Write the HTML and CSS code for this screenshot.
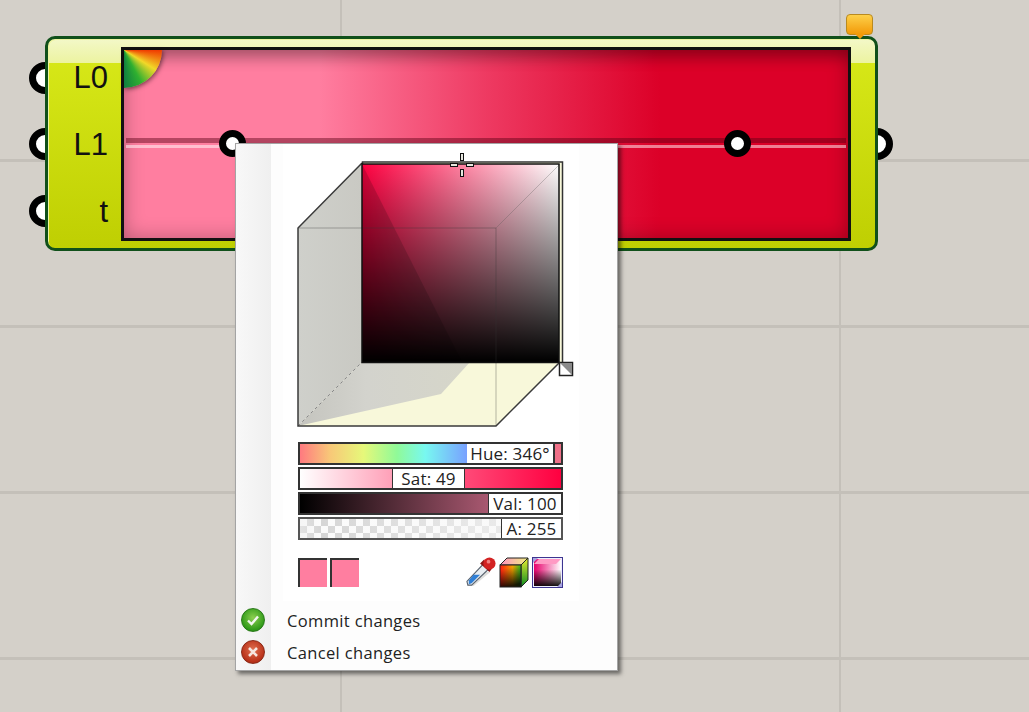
FILE: index.html
```html
<!DOCTYPE html>
<html lang="en">
<head>
    <meta charset="UTF-8">
    <title>Colour gradient component</title>
    <link rel="stylesheet" href="styles.css">
</head>
<body>
    <div class="canvas">
        <div class="gridline v" style="left: 340px"></div>
        <div class="gridline v" style="left: 839px"></div>
        <div class="gridline h" style="top: 159px"></div>
        <div class="gridline h" style="top: 325px"></div>
        <div class="gridline h" style="top: 491px"></div>
        <div class="gridline h" style="top: 657px"></div>

        <div class="grip" style="left: 29px; top: 62px"></div>
        <div class="grip" style="left: 29px; top: 128px"></div>
        <div class="grip" style="left: 29px; top: 195px"></div>
        <div class="grip" style="left: 861px; top: 128px"></div>

        <div class="node">
            <div class="labels">
                <span>L0</span>
                <span>L1</span>
                <span>t</span>
            </div>
            <div class="panel">
                <div class="wheel"></div>
                <div class="track"></div>
                <div class="handle" style="left: 95px"></div>
                <div class="handle" style="left: 600px"></div>
            </div>
        </div>
        <div class="balloon"></div>

        <div class="popup">
            <div class="sheet">
                <svg class="cube" width="290" height="286" viewBox="290 150 290 286">
                    <defs>
                        <linearGradient id="satGrad">
                            <stop offset="0" stop-color="#ff0040"/>
                            <stop offset="1" stop-color="#ffffff"/>
                        </linearGradient>
                        <linearGradient id="valGrad" x2="0" y2="1">
                            <stop offset="0" stop-color="#000" stop-opacity="0"/>
                            <stop offset="1" stop-color="#000"/>
                        </linearGradient>
                        <linearGradient id="wallGrad">
                            <stop offset="0" stop-color="#cfd0cb"/>
                            <stop offset="1" stop-color="#c9c9c3"/>
                        </linearGradient>
                        <linearGradient id="floorShade">
                            <stop offset="0" stop-color="#c4c4be"/>
                            <stop offset="0.4" stop-color="#d3d3cd"/>
                            <stop offset="1" stop-color="#d6d6c9"/>
                        </linearGradient>
                    </defs>
                    <rect x="362.5" y="162" width="200" height="201" fill="#f8f8da" stroke="#333" stroke-width="1.5"/>
                    <polygon points="298,426 496,426 560,362 362,362" fill="#f8f8da"/>
                    <polygon points="298,426 362,362 470,362 441,394" fill="url(#floorShade)"/>
                    <polygon points="298,228 362,163 362,362 298,426" fill="url(#wallGrad)"/>
                    <line x1="298" y1="426" x2="362" y2="362" stroke="#888" stroke-dasharray="3 3"/>
                    <rect x="362" y="164" width="197" height="198" fill="url(#satGrad)"/>
                    <rect x="362" y="164" width="197" height="198" fill="url(#valGrad)"/>
                    <polygon points="362,164 362,362 462,362" fill="#000" fill-opacity="0.16"/>
                    <polyline points="298,228 496,228 496,426" fill="none" stroke="#333" stroke-opacity="0.35"/>
                    <line x1="496" y1="228" x2="560" y2="164" stroke="#555" stroke-opacity="0.3"/>
                    <polyline points="362,163 298,228 298,426 496,426 560,362" fill="none" stroke="#3a3a3a" stroke-width="1.5"/>
                    <rect x="362" y="164" width="197" height="198.5" fill="none" stroke="#111" stroke-width="1.5"/>
                    <rect x="559.5" y="362.5" width="13" height="13" fill="#fff" stroke="#222" stroke-width="1.5"/>
                    <polygon points="560,363 572,363 572,375" fill="#8a8a8a"/>
                    <g fill="#e8e8e0" stroke="#111">
                        <rect x="460.5" y="153.5" width="3" height="7"/>
                        <rect x="460.5" y="169.5" width="3" height="7"/>
                        <rect x="450.5" y="163.5" width="7" height="3"/>
                        <rect x="466.5" y="163.5" width="7" height="3"/>
                    </g>
                </svg>

                <div class="sliders">
                    <div class="slider">
                        <div class="fill hue"></div>
                        <div class="value value-hue">Hue: 346°</div>
                        <div class="fill hue-end"></div>
                    </div>
                    <div class="slider">
                        <div class="fill sat-low"></div>
                        <div class="value value-sat">Sat: 49</div>
                        <div class="fill sat-high"></div>
                    </div>
                    <div class="slider">
                        <div class="fill val"></div>
                        <div class="value value-val">Val: 100</div>
                    </div>
                    <div class="slider slider-alpha">
                        <div class="fill alpha"></div>
                        <div class="value value-alpha">A: 255</div>
                    </div>
                </div>

                <div class="tools">
                    <div class="swatch"></div>
                    <div class="swatch"></div>
                    <svg class="tool-icon dropper" width="30" height="32" viewBox="0 0 32 32">
                        <polygon points="1,31 8,31 26,16 14,16" fill="#c8c8c4" fill-opacity="0.6"/>
                        <polygon points="2,30 6,30 24,13 18,8 1,26" fill="#e8edf2" stroke="#5a6470" stroke-width="1.2"/>
                        <polygon points="3,29 6,28 15,19 8,19 3,25" fill="#2f7fd6"/>
                        <polygon points="15,7 25,16 28,12 19,3" fill="#8e1616"/>
                        <circle cx="25" cy="7" r="6.5" fill="#d32222"/>
                        <circle cx="24" cy="5" r="2" fill="#f08080"/>
                    </svg>
                    <svg class="tool-icon" width="30" height="31" viewBox="0 0 30 31">
                        <defs>
                            <linearGradient id="frontHue">
                                <stop offset="0" stop-color="#ff1a10"/>
                                <stop offset="0.6" stop-color="#f0a000"/>
                                <stop offset="1" stop-color="#30c020"/>
                            </linearGradient>
                            <linearGradient id="frontShade" x2="0.2" y2="1">
                                <stop offset="0.2" stop-color="#000" stop-opacity="0"/>
                                <stop offset="1" stop-color="#000" stop-opacity="0.85"/>
                            </linearGradient>
                            <linearGradient id="sideGrad" x2="0" y2="1">
                                <stop offset="0" stop-color="#e8ee30"/>
                                <stop offset="1" stop-color="#0a8a20"/>
                            </linearGradient>
                            <linearGradient id="topGrad">
                                <stop offset="0" stop-color="#ff90c0"/>
                                <stop offset="1" stop-color="#f0f080"/>
                            </linearGradient>
                        </defs>
                        <polygon points="1,8 8,1 29,1 22,8" fill="url(#topGrad)" stroke="#222"/>
                        <polygon points="22,8 29,1 29,23 22,30" fill="url(#sideGrad)" stroke="#222"/>
                        <rect x="1" y="8" width="21" height="22" fill="url(#frontHue)"/>
                        <rect x="1" y="8" width="21" height="22" fill="url(#frontShade)" stroke="#222"/>
                    </svg>
                    <svg class="tool-icon" width="31" height="31" viewBox="0 0 31 31">
                        <defs>
                            <linearGradient id="satFront" x2="1" y2="0">
                                <stop offset="0" stop-color="#e8006c"/>
                                <stop offset="1" stop-color="#fff"/>
                            </linearGradient>
                            <linearGradient id="valFront" x2="0" y2="1">
                                <stop offset="0.25" stop-color="#000" stop-opacity="0"/>
                                <stop offset="1" stop-color="#000" stop-opacity="0.92"/>
                            </linearGradient>
                        </defs>
                        <rect x="0.5" y="0.5" width="30" height="30" fill="#eef" stroke="#3d3590"/>
                        <rect x="2" y="2" width="27" height="27" fill="url(#satFront)"/>
                        <polygon points="2,7 7,2 29,2 24,7" fill="#ff9ac4"/>
                        <rect x="2" y="7" width="27" height="22" fill="url(#valFront)"/>
                        <polygon points="1,1 6,1 1,6" fill="#a8a4e0"/>
                        <polygon points="30,30 25,30 30,25" fill="#a8a4e0"/>
                    </svg>
                </div>
            </div>

            <div class="menu">
                <div class="menu-item">
                    <span class="menu-icon ok">
                        <svg width="14" height="14" viewBox="0 0 14 14"><path d="M2 7.5 L5.5 11 L12 3.5" fill="none" stroke="#f2f6ee" stroke-width="2.4"/></svg>
                    </span>
                    <span>Commit changes</span>
                </div>
                <div class="menu-item">
                    <span class="menu-icon cancel">
                        <svg width="14" height="14" viewBox="0 0 14 14"><path d="M3 3 L11 11 M11 3 L3 11" fill="none" stroke="#f6e6e0" stroke-width="2.6"/></svg>
                    </span>
                    <span>Cancel changes</span>
                </div>
            </div>
        </div>
    </div>
</body>
</html>
```

FILE: styles.css
```css
html, body {
    margin: 0;
    padding: 0;
}

.canvas {
    position: relative;
    width: 1029px;
    height: 712px;
    overflow: hidden;
    background-color: #d4d0c9;
    font-family: "Liberation Sans", Arial, sans-serif;
}

.gridline {
    position: absolute;
    background-color: #c4c0b9;
}

.gridline.v {
    top: 0;
    width: 2px;
    height: 712px;
}

.gridline.h {
    left: 0;
    width: 1029px;
    height: 3px;
}

.grip {
    position: absolute;
    box-sizing: border-box;
    width: 32px;
    height: 32px;
    border: 7px solid #000;
    border-radius: 50%;
    background-color: #fff;
}

.node {
    position: absolute;
    left: 45px;
    top: 36px;
    box-sizing: border-box;
    display: flex;
    width: 833px;
    height: 215px;
    padding: 8px 24px 7px 0;
    border: 3px solid #10501a;
    border-radius: 10px;
    background:
        linear-gradient(#f3f8c8, #ecf3a0) 0 0 / 100% 24px no-repeat,
        linear-gradient(#d9ea1a, #bfcf02);
    box-shadow: inset 1px 1px 0 #eef5a0;
}

.labels {
    display: flex;
    flex-direction: column;
    justify-content: center;
    align-items: flex-end;
    gap: 36px;
    box-sizing: border-box;
    width: 73px;
    padding-right: 13px;
    font-size: 31px;
    line-height: 1;
    color: #111;
}

.panel {
    position: relative;
    flex: 1;
    border: 3px solid #111;
    background: linear-gradient(to right, #ff7ea0 0, #ff7ea0 27%, #ee3a62 50%, #dc0028 74%, #dc0028 100%);
    box-shadow: inset 0 16px 14px -8px rgba(0, 0, 0, 0.22), inset 0 0 20px rgba(0, 0, 0, 0.28);
}

.wheel {
    position: absolute;
    left: 0;
    top: 0;
    width: 38px;
    height: 38px;
    border-bottom-right-radius: 100%;
    background: conic-gradient(at 0 0, #f03a00 90deg, #f2d828 122deg, #30b030 152deg, #108040 180deg);
    box-shadow: 1px 1px 5px rgba(0, 0, 0, 0.6);
}

.track {
    position: absolute;
    left: 2px;
    right: 2px;
    top: 88px;
    height: 5px;
    background-color: rgba(90, 0, 20, 0.45);
}

.track::after {
    content: "";
    position: absolute;
    left: 0;
    right: 0;
    top: 7px;
    height: 3px;
    background-color: rgba(255, 255, 255, 0.5);
}

.handle {
    position: absolute;
    top: 80px;
    box-sizing: border-box;
    width: 27px;
    height: 27px;
    border: 7px solid #000;
    border-radius: 50%;
    background-color: #fff;
}

.balloon {
    position: absolute;
    left: 846px;
    top: 14px;
    box-sizing: border-box;
    width: 27px;
    height: 21px;
    border: 1px solid #b98a20;
    border-radius: 4px;
    background: linear-gradient(#fdd04a, #f29a08);
}

.balloon::after {
    content: "";
    position: absolute;
    left: 8px;
    top: 19px;
    border-top: 5px solid #f29a08;
    border-left: 5px solid transparent;
    border-right: 5px solid transparent;
}

.popup {
    position: absolute;
    left: 235px;
    top: 143px;
    box-sizing: border-box;
    display: flex;
    flex-direction: column;
    width: 383px;
    height: 528px;
    border: 1px solid #a4a4a4;
    background:
        linear-gradient(to right, #f8f8f8, #efefef) 0 0 / 35px 100% no-repeat,
        #fdfdfd;
    box-shadow: 3px 3px 4px rgba(0, 0, 0, 0.5);
    font-family: "Open Sans", "Noto Sans", sans-serif;
    color: #222;
}

.sheet {
    display: flex;
    flex-direction: column;
    box-sizing: border-box;
    width: 296px;
    height: 457px;
    margin-left: 47px;
    padding: 6px 0 0 15px;
    background-color: #fff;
}

.cube {
    display: block;
    margin-left: -8px;
}

.sliders {
    display: flex;
    flex-direction: column;
    gap: 2px;
    width: 265px;
    margin-top: 6px;
}

.slider {
    display: flex;
    box-sizing: border-box;
    height: 23px;
    border: 2px solid #333;
    background-color: #333;
}

.slider-alpha {
    border-color: #555;
}

.fill {
    flex: 1;
}

.hue {
    background: linear-gradient(to right, #ff7a80, #f8c878 18%, #e6f87a 38%, #90fa98 58%, #78f8f0 75%, #78a0ff 100%);
}

.hue-end {
    flex: none;
    width: 6px;
    margin-left: 2px;
    background-color: #f07088;
}

.sat-low {
    flex: none;
    width: 92px;
    background: linear-gradient(to right, #fff, #ffa0b8);
}

.sat-high {
    background: linear-gradient(to right, #ff4a78, #ff0040);
}

.val {
    background: linear-gradient(to right, #000, #a85870);
}

.alpha {
    background:
        linear-gradient(to right, rgba(240, 240, 240, 0.5), rgba(248, 248, 248, 0) 10%, rgba(248, 248, 248, 0.55) 90%),
        conic-gradient(#d6d6d6 25%, #fbfbfb 0 50%, #d6d6d6 0 75%, #fbfbfb 0) 0 0 / 14px 14px;
}

.value {
    box-sizing: border-box;
    background-color: #fff;
    font-size: 17px;
    letter-spacing: 0.2px;
    line-height: 19px;
    text-align: center;
    white-space: nowrap;
}

.value-hue {
    width: 86px;
}

.value-sat {
    width: 71px;
    margin: 0 1px;
}

.value-val {
    width: 72px;
    margin-left: 1px;
}

.value-alpha {
    width: 59px;
    margin-left: 1px;
}

.tools {
    display: flex;
    align-items: center;
    gap: 3px;
    width: 265px;
    margin-top: 16px;
}

.swatch {
    box-sizing: border-box;
    width: 29px;
    height: 29px;
    background-color: #ff7ea0;
    border-top: 2px solid #333;
    border-left: 2px solid #333;
}

.dropper {
    margin-left: auto;
}

.tool-icon {
    display: block;
}

.menu {
    display: flex;
    flex-direction: column;
    margin-top: 3px;
}

.menu-item {
    display: flex;
    align-items: center;
    height: 32px;
    font-size: 16.5px;
    letter-spacing: 0.35px;
}

.menu-icon {
    display: flex;
    align-items: center;
    justify-content: center;
    box-sizing: border-box;
    width: 24px;
    height: 24px;
    margin: 0 22px 0 5px;
    border-radius: 50%;
}

.ok {
    background: radial-gradient(circle at 50% 40%, #8ccf50, #2f9a18 70%, #1c6e10);
    border: 1px solid #2a7a1a;
}

.cancel {
    background: radial-gradient(circle at 50% 40%, #e07050, #b83018 70%, #8a2010);
    border: 1px solid #8a2a18;
}
```
